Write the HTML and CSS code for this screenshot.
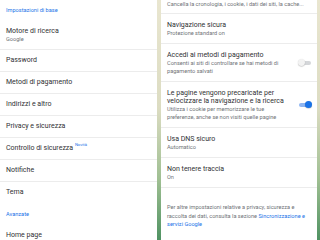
FILE: index.html
```html
<!DOCTYPE html>
<html lang="it">
<head>
    <meta charset="UTF-8">
    <meta name="viewport" content="width=device-width, initial-scale=1.0">
    <title>Impostazioni</title>
    <link rel="stylesheet" href="styles.css">
</head>
<body>

    <!-- Settings list -->
    <div class="panel panel-left">
        <div class="section-title first">Impostazioni di base</div>
        <div class="row row-two">
            <div class="title">Motore di ricerca</div>
            <div class="sub">Google</div>
        </div>
        <div class="row">Password</div>
        <div class="row">Metodi di pagamento</div>
        <div class="row">Indirizzi e altro</div>
        <div class="row">Privacy e sicurezza</div>
        <div class="row">Controllo di sicurezza <span class="badge">Novità</span></div>
        <div class="row">Notifiche</div>
        <div class="row no-line">Tema</div>
        <div class="section-title">Avanzate</div>
        <div class="row no-line">Home page</div>
    </div>

    <!-- Privacy and security detail -->
    <div class="panel panel-right">
        <div class="item item-top">
            <div class="desc">Cancella la cronologia, i cookie, i dati dei siti, la cache...</div>
        </div>
        <div class="item">
            <div class="text">
                <div class="title">Navigazione sicura</div>
                <div class="desc">Protezione standard on</div>
            </div>
        </div>
        <div class="item">
            <div class="text">
                <div class="title">Accedi ai metodi di pagamento</div>
                <div class="desc">Consenti ai siti di controllare se hai metodi di<br>pagamento salvati</div>
            </div>
            <div class="switch"><div class="knob"></div></div>
        </div>
        <div class="item">
            <div class="text">
                <div class="title">Le pagine vengono precaricate per<br>velocizzare la navigazione e la ricerca</div>
                <div class="desc">Utilizza i cookie per memorizzare le tue<br>preferenze, anche se non visiti quelle pagine</div>
            </div>
            <div class="switch on"><div class="knob"></div></div>
        </div>
        <div class="item">
            <div class="text">
                <div class="title">Usa DNS sicuro</div>
                <div class="desc">Automatico</div>
            </div>
        </div>
        <div class="item">
            <div class="text">
                <div class="title">Non tenere traccia</div>
                <div class="desc">On</div>
            </div>
        </div>
        <p class="footnote">Per altre impostazioni relative a privacy, sicurezza e<br>raccolta dei dati, consulta la sezione <a href="#">Sincronizzazione e<br>servizi Google</a></p>
    </div>

</body>
</html>
```

FILE: styles.css
```css
/* General styles */
body {
    margin: 0;
    width: 320px;
    height: 240px;
    overflow: hidden;
    display: flex;
    font-family: Roboto, "Noto Sans", sans-serif;
    color: #303134;
    background: linear-gradient(#e9e6d0 0%, #dcdcc2 45%, #9fbf92 75%, #4f9262 100%);
}

.panel {
    background-color: #fff;
    height: 240px;
    overflow: hidden;
}

.panel-left {
    width: 157px;
    margin-right: 4px;
}

.panel-right {
    width: 156px;
}

/* Left list */
.section-title {
    height: 22px;
    line-height: 22px;
    padding-left: 6px;
    font-size: 5.6px;
    color: #1a73e8;
}

.section-title.first {
    height: 20px;
    line-height: 20px;
}

.row {
    height: 21px;
    line-height: 21px;
    padding-left: 6px;
    font-size: 7px;
    border-bottom: 1px solid #ececec;
    white-space: nowrap;
}

.row.no-line {
    border-bottom: none;
}

.row-two {
    height: 29px;
    line-height: normal;
    display: flex;
    flex-direction: column;
    justify-content: center;
}

.row-two .title {
    line-height: 8px;
}

.row-two .sub {
    line-height: 8px;
    font-size: 5.6px;
    color: #6f7377;
}

.badge {
    font-size: 4.2px;
    color: #1a73e8;
    vertical-align: 4px;
    line-height: 0;
}

/* Right detail */
.item {
    display: flex;
    align-items: center;
    padding: 7px 0 6px 6px;
    border-bottom: 1px solid #ececec;
}

.item-top {
    padding-top: 0;
    padding-bottom: 5px;
}

.text {
    flex-grow: 1;
}

.item .title {
    font-size: 7px;
    line-height: 8px;
}

.item .desc {
    font-size: 5.6px;
    line-height: 8px;
    color: #6f7377;
    white-space: nowrap;
}

.switch {
    position: relative;
    width: 14px;
    height: 8px;
    margin-right: 5px;
    flex-shrink: 0;
}

.switch::before {
    content: "";
    position: absolute;
    left: 1px;
    right: 1px;
    top: 2px;
    height: 4px;
    border-radius: 2px;
    background-color: #d4d6d9;
}

.switch .knob {
    position: absolute;
    left: 0;
    top: 0;
    width: 7px;
    height: 7px;
    border-radius: 50%;
    background-color: #f3f3f3;
    box-shadow: 0 0.5px 1px rgba(0, 0, 0, 0.3);
}

.switch.on::before {
    background-color: #8fb6f2;
}

.switch.on .knob {
    left: auto;
    right: 0;
    background-color: #1a73e8;
}

.footnote {
    margin: 15px 0 0 6px;
    font-size: 5.6px;
    line-height: 8.5px;
    color: #6f7377;
    white-space: nowrap;
}

.footnote a {
    color: #1a73e8;
    text-decoration: none;
}
```
